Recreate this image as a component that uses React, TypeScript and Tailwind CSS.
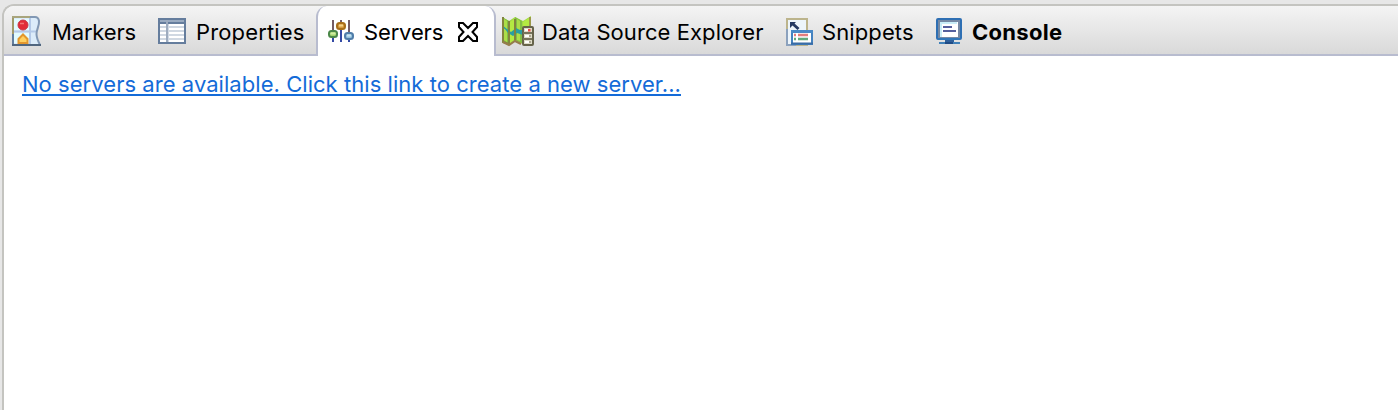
import React from "react";

function MarkersIcon() {
  return (
    <svg width="32" height="32" viewBox="0 0 32 32" className="shrink-0">
      <path d="M3 2H27C29 3 30 5 29 8C26 13 25 17 28 23C29 26 30 28 31 30H3Z" fill="#dcecfa" />
      <path d="M4 4H19V15H4ZM4 18H19V28H4Z" fill="#e2fbff" />
      <path d="M20 2V30M3 16.500H26" stroke="#b4c9e8" strokeWidth="2" fill="none" />
      <path d="M3 1V20" stroke="#a29a6a" strokeWidth="2" />
      <path d="M3 19V30" stroke="#637e9e" strokeWidth="2" />
      <path d="M30 30C28 26 26.500 22 26.500 19C26.500 14 29.500 11 29 6C28.500 3 27 2 25 2H20" fill="none" stroke="#8298b4" strokeWidth="2" />
      <path d="M2 2H20" stroke="#a8a57d" strokeWidth="2" />
      <circle cx="13" cy="10" r="5" fill="#e22c38" stroke="#c93846" />
      <path d="M10 8.500H14" stroke="#f27674" strokeWidth="1.500" />
      <path d="M8.500 28V24L13 19.500L17.500 24V28Z" fill="#ffd060" stroke="#e3962d" strokeWidth="2" />
      <path d="M2 30H31" stroke="#50667f" strokeWidth="2" />
    </svg>
  );
}

function PropertiesIcon() {
  return (
    <svg width="32" height="32" viewBox="0 0 32 32" className="shrink-0">
      <rect x="2" y="3" width="28" height="26" fill="#657d9d" />
      <rect x="4" y="5" width="24" height="2" fill="#9aabc1" />
      <rect x="4" y="9" width="24" height="18" fill="#fff" />
      <path d="M4 12H28M4 16H28M4 20H28M4 24H28" stroke="#d0d8e2" strokeWidth="2" />
      <path d="M11 5V27" stroke="#9eacbf" strokeWidth="2" />
      <path d="M12.500 9V27" stroke="#d0d9e4" />
    </svg>
  );
}

function ServersIcon() {
  return (
    <svg width="32" height="32" viewBox="0 0 32 32" className="shrink-0">
      <path d="M8 5V15M24 5V17M16 5V8" stroke="#755c64" strokeWidth="2" />
      <path d="M8 22V27M16 15V27M24 25V27" stroke="#344aa5" strokeWidth="2" />
      <rect x="4" y="16" width="8" height="6" rx="2.500" fill="#a4d46f" stroke="#4a8748" strokeWidth="2" />
      <path d="M5.500 18.500H10.500" stroke="#d1eea3" strokeWidth="2" />
      <rect x="12" y="8" width="8" height="6" rx="2.500" fill="#d79a3d" stroke="#a86d19" strokeWidth="2" />
      <path d="M14 10.500H18" stroke="#f4d28a" strokeWidth="2" />
      <rect x="20" y="18" width="8" height="6" rx="2.500" fill="#95c2de" stroke="#507da9" strokeWidth="2" />
      <path d="M22 20.500H26" stroke="#c8e4f1" strokeWidth="2" />
    </svg>
  );
}

function CloseIcon() {
  return (
    <svg width="22" height="22" viewBox="0 0 22 22" className="shrink-0">
      <path
        d="M2 2H6L11 7L16 2H20V6L15.500 11L20 16V20H16L11 15L6 20H2V16L6.500 11L2 6Z"
        fill="#fff"
        stroke="#000"
        strokeWidth="2"
      />
    </svg>
  );
}

function DataSourceIcon() {
  return (
    <svg width="34" height="32" viewBox="0 0 34 32" className="shrink-0">
      <path d="M1 2L8 6L14 2L22 6L30 1V25L22 29L14 26L8 30L1 27Z" fill="#a2d946" />
      <path d="M1 2L8 6V29L1 27ZM14 2L21 6V28L14 25Z" fill="#83bf43" />
      <path d="M3 4L6 6V27L3 25ZM16 4L19 6V26L16 25Z" fill="#acde48" />
      <path d="M9 7L13 4V25L9 28ZM22 7L28 3V13H22Z" fill="#b4ea42" />
      <path d="M1 10L6 14L10 17L15 13L19 15H22V20L16 18L12 21L7 18L4 14L1 13Z" fill="#299ea2" />
      <path d="M2 2V27L8 29M8 6V29M14 4V25" fill="none" stroke="#82843f" strokeWidth="2" />
      <path d="M2 27L8 30L14 26L20 29" fill="none" stroke="#957c4c" strokeWidth="2" />
      <path d="M29 2V11" stroke="#9b9948" strokeWidth="2" />
      <rect x="22" y="12" width="10" height="18" rx="1" fill="#dedbc7" stroke="#66634a" strokeWidth="2" />
      <path d="M22 18H31M22 24H31" stroke="#77735b" strokeWidth="2" />
      <path d="M24 15H28M24 21H28M24 27H28" stroke="#fff" strokeWidth="2" />
      <rect x="27" y="14" width="2.500" height="2.500" fill="#ef4b49" />
      <path d="M28 21H30M28 27H30" stroke="#aaa58f" strokeWidth="2" />
    </svg>
  );
}

function SnippetsIcon() {
  return (
    <svg width="32" height="32" viewBox="0 0 32 32" className="shrink-0">
      <rect x="3" y="4" width="20" height="26" fill="#edf5fb" stroke="#bcb48c" strokeWidth="2" />
      <path d="M3 14V30H12" fill="none" stroke="#8ba1bd" strokeWidth="2" />
      <path d="M6 7H12L10.500 8.500L15.500 13L13.500 15L8.500 10.500L6 13Z" fill="#243962" />
      <rect x="8" y="17" width="20" height="12" fill="#fff" stroke="#4482bf" strokeWidth="2" />
      <path d="M7 16.500H29" stroke="#4989c6" strokeWidth="3" />
      <path d="M10 20H12M14 20H24" stroke="#e27d7d" strokeWidth="2.400" />
      <path d="M10 24H12M14 24H24" stroke="#63aa7b" strokeWidth="2.400" />
      <path d="M7 28.500H29" stroke="#3a6ca5" strokeWidth="2" />
    </svg>
  );
}

function ConsoleIcon() {
  return (
    <svg width="32" height="32" viewBox="0 0 32 32" className="shrink-0">
      <rect x="4" y="4" width="24" height="20" rx="1" fill="#7589a4" stroke="#2e6fb3" strokeWidth="2" />
      <rect x="7" y="7" width="18" height="15" fill="#fff" />
      <path d="M8 22V8H24" fill="none" stroke="#c9edf7" strokeWidth="2" />
      <path d="M10 12H19M10 16H23" stroke="#55609d" strokeWidth="2" />
      <path d="M5 24H27" stroke="#3176b7" strokeWidth="2" />
      <path d="M12 26.500H21" stroke="#2f609b" strokeWidth="3" />
      <path d="M6 28H27" stroke="#4181b9" strokeWidth="2" />
      <path d="M12 28H20" stroke="#204c86" strokeWidth="2" />
    </svg>
  );
}

export default function App() {
  return (
    <main className="flex h-[410px] w-full flex-col overflow-hidden bg-[#e7e7e7] pl-0.5 pt-1 font-['Inter','Liberation_Sans',sans-serif] text-[22px] leading-8 text-black">
      <section className="flex flex-1 flex-col rounded-tl-[12px] border-l-2 border-t-2 border-[#c4c4c0] bg-white">
        <nav className="flex h-[50px] shrink-0 whitespace-nowrap rounded-tl-[10px] bg-linear-to-b from-[#f4f4f4] to-[#d8d8d8]">
          <div className="flex w-[145px] shrink-0 items-start gap-[10px] border-b-2 border-[#b8bccf] pl-[6px] pt-[9px]">
            <MarkersIcon />
            <span className="pt-px tracking-[-0.17px]">Markers</span>
          </div>
          <div className="flex w-[167px] shrink-0 items-start gap-2 border-b-2 border-[#b8bccf] pl-[7px] pt-[9px]">
            <PropertiesIcon />
            <span className="pt-px tracking-[0.15px]">Properties</span>
          </div>
          <div className="flex w-[180px] shrink-0 items-start rounded-t-[11px] border-x-2 border-[#b8bccf] bg-white pl-[7px] pt-[9px]">
            <ServersIcon />
            <span className="ml-[7px] w-[93px] pt-px tracking-[-0.15px]">Servers</span>
            <span className="mt-[6px]"><CloseIcon /></span>
          </div>
          <div className="flex w-[282px] shrink-0 items-start gap-[7px] border-b-2 border-[#b8bccf] pl-[5px] pt-[9px]">
            <DataSourceIcon />
            <span className="pt-px tracking-[0.07px]">Data Source Explorer</span>
          </div>
          <div className="flex w-[150px] shrink-0 items-start gap-[6px] border-b-2 border-[#b8bccf] pl-[6px] pt-[9px]">
            <SnippetsIcon />
            <span className="pt-px tracking-[0.1px]">Snippets</span>
          </div>
          <div className="flex flex-1 items-start gap-[7px] border-b-2 border-[#b8bccf] pl-[5px] pt-[9px]">
            <ConsoleIcon />
            <span className="pt-px font-bold tracking-[0.3px]">Console</span>
          </div>
        </nav>
        <div className="px-[18px] pt-3">
          <a href="#" className="inline-block whitespace-nowrap tracking-[0.046px] text-[#146bd8] underline decoration-2 underline-offset-[2px] [text-decoration-skip-ink:none]">
            No servers are available. Click this link to create a new server...
          </a>
        </div>
      </section>
    </main>
  );
}
